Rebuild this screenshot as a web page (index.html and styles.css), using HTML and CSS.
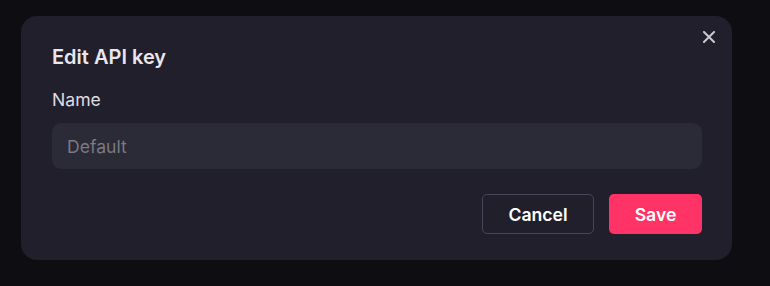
FILE: index.html
```html
<!DOCTYPE html>
<html>
<head>
<meta charset="utf-8">
<link rel="stylesheet" href="styles.css">
</head>
<body>
<div class="modal">
  <button class="close" aria-label="Close">
    <svg width="12" height="12" viewBox="0 0 12 12"><path d="M1 1L11 11M11 1L1 11" stroke="#c9c8d0" stroke-width="2" stroke-linecap="square"/></svg>
  </button>
  <h2 class="title">Edit API key</h2>
  <label class="label">Name</label>
  <div class="input">Default</div>
  <div class="actions">
    <button class="btn btn-cancel">Cancel</button>
    <button class="btn btn-save">Save</button>
  </div>
</div>
</body>
</html>
```
FILE: styles.css
```css
html, body {
  margin: 0;
  height: 100%;
}
body {
  background: #0e0d12;
  font-family: Inter, "Noto Sans", sans-serif;
  padding: 16px 0 0 21px;
  box-sizing: border-box;
}
.modal {
  position: relative;
  width: 711px;
  height: 244px;
  box-sizing: border-box;
  background: #201f2b;
  border-radius: 16px;
  padding: 27px 30px 26px 31px;
  display: flex;
  flex-direction: column;
}
.close {
  position: absolute;
  top: 15px;
  right: 17px;
  width: 12px;
  height: 12px;
  padding: 0;
  border: 0;
  background: none;
  display: flex;
}
.title {
  margin: 0;
  font-size: 20px;
  line-height: 28px;
  font-weight: 600;
  color: #e8e7ed;
}
.label {
  margin-top: 17px;
  font-size: 17.6px;
  line-height: 24px;
  color: #dddce3;
}
.input {
  margin-top: 11px;
  height: 46px;
  box-sizing: border-box;
  background: #2b2a37;
  border-radius: 9px;
  padding: 0 15px;
  display: flex;
  align-items: center;
  font-size: 17.6px;
  color: #7a7984;
}
.actions {
  margin-top: 25px;
  display: flex;
  justify-content: flex-end;
  gap: 15px;
}
.btn {
  height: 40px;
  box-sizing: border-box;
  border-radius: 5px;
  font-family: Inter, "Noto Sans", sans-serif;
  font-size: 17.6px;
  font-weight: 600;
  color: #ffffff;
  padding: 0;
}
.btn-cancel {
  width: 112px;
  background: transparent;
  border: 1px solid #46455a;
}
.btn-save {
  width: 93px;
  background: #ff3366;
  border: 0;
}
```
